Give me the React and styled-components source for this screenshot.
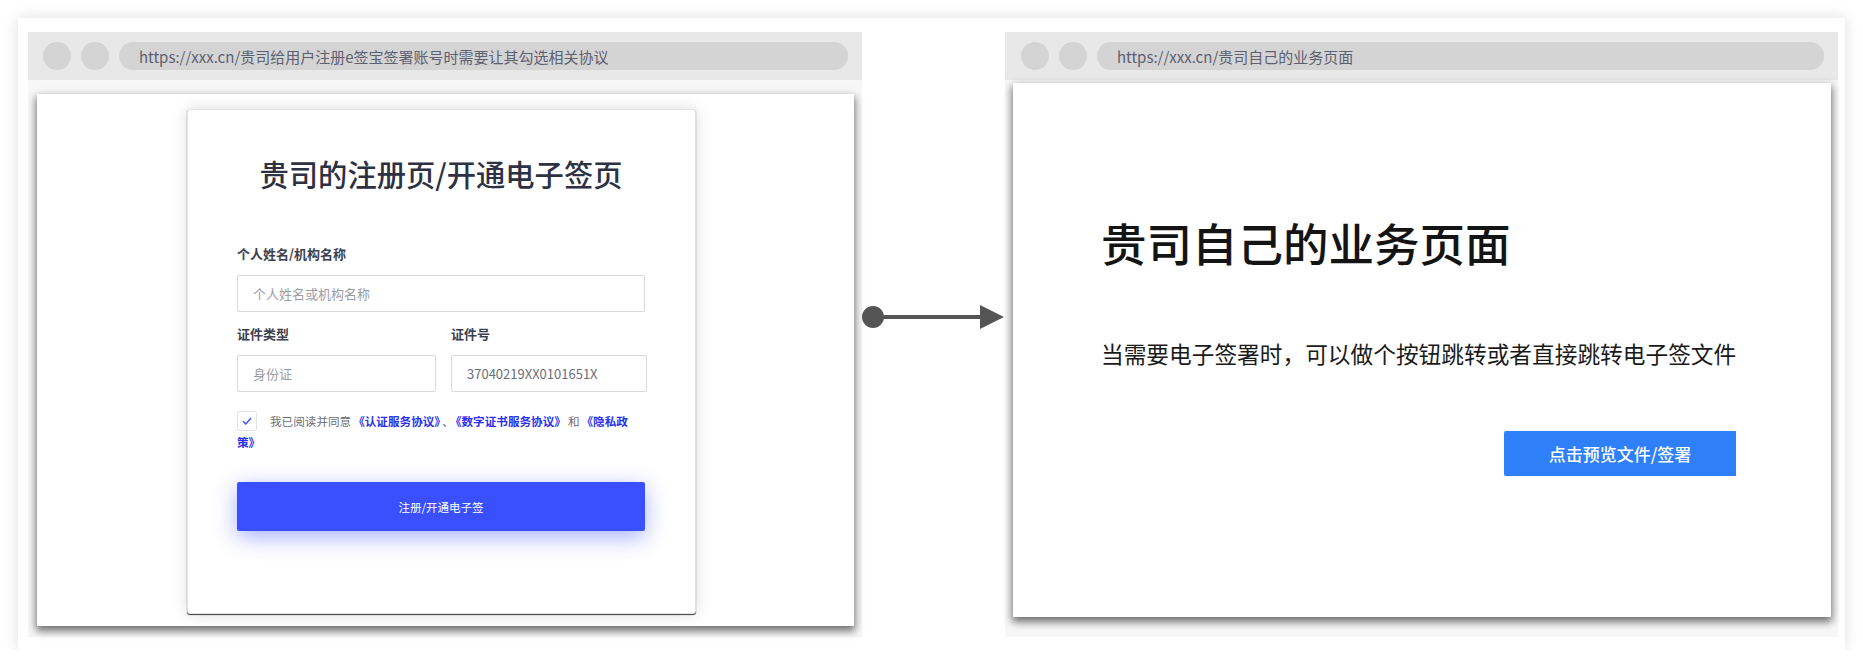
import React from "react";
import styled, { createGlobalStyle } from "styled-components";

const GlobalStyle = createGlobalStyle`
  html, body {
    margin: 0;
    padding: 0;
    background: #ffffff;
    font-family: "Noto Sans CJK SC", "Noto Sans", sans-serif;
  }
`;

const Board = styled.div`
  margin: 18px 0 0 18px;
  width: 1827px;
  height: 632px;
  box-sizing: border-box;
  padding: 14px 7px 12px 10px;
  display: flex;
  align-items: flex-start;
  background: #fff;
  box-shadow: 0 0 14px rgba(0, 0, 0, 0.13);
`;

const Window = styled.div`
  width: ${(p) => p.$width}px;
  height: 605px;
  display: flex;
  flex-direction: column;
  background: #f7f7f7;
`;

const TopBar = styled.div`
  height: 48px;
  flex-shrink: 0;
  display: flex;
  align-items: center;
  gap: 10px;
  padding: 0 14px 0 ${(p) => p.$padLeft}px;
  background: #e8e8e8;
`;

const Dot = styled.span`
  width: 28px;
  height: 28px;
  border-radius: 50%;
  background: #d4d4d4;
  flex-shrink: 0;
`;

const Address = styled.div`
  flex: 1;
  height: 28px;
  border-radius: 14px;
  background: #d4d4d4;
  display: flex;
  align-items: center;
  padding-left: 20px;
  font-size: 15px;
  color: #5d6070;
  white-space: nowrap;
`;

const Screen = styled.div`
  flex: 1;
  margin: ${(p) => p.$margin};
  background: #fff;
  box-shadow: 0 4px 8px 1px rgba(0, 0, 0, 0.55);
  display: flex;
  flex-direction: column;
`;

/* left: the sign-up form */
const FormCard = styled.div`
  margin: 15px 0 0 150px;
  width: 509px;
  height: 505px;
  box-sizing: border-box;
  padding: 43px 50px 0 49px;
  background: #fff;
  border: 1px solid #e2e2e2;
  border-radius: 3px;
  box-shadow: 0 1px 1px rgba(0, 0, 0, 0.75), 0 0 16px rgba(0, 0, 0, 0.14);
  display: flex;
  flex-direction: column;
`;

const FormTitle = styled.h1`
  margin: 0 0 52px;
  text-align: center;
  font-size: 29.3px;
  line-height: 40px;
  font-weight: 500;
  color: #2d3142;
`;

const Label = styled.div`
  font-size: 13px;
  line-height: 18px;
  font-weight: 700;
  color: #3c3f50;
  margin-bottom: 12px;
`;

const Input = styled.div`
  height: 37px;
  box-sizing: border-box;
  border: 1px solid #d9d9de;
  border-radius: 2px;
  padding-left: 15px;
  display: flex;
  align-items: center;
  font-size: 13px;
  color: ${(p) => (p.$filled ? "#6b6e7a" : "#9a9ca5")};
`;

const Row = styled.div`
  display: grid;
  grid-template-columns: 199px 196px;
  column-gap: 15px;
  margin-top: 13px;
`;

const Agree = styled.p`
  margin: 19px 0 0;
  font-size: 11.6px;
  line-height: 21px;
  color: #6b6e7a;
`;

const Check = styled.span`
  display: inline-flex;
  align-items: center;
  justify-content: center;
  width: 20px;
  height: 20px;
  box-sizing: border-box;
  border: 1px solid #e4e4e8;
  border-radius: 2px;
  vertical-align: middle;
  margin: -3px 13px 0 0;
`;

const Link = styled.b`
  color: #2b30f0;
  font-weight: 700;
  margin: 0 2px;
`;

const SubmitButton = styled.button`
  margin-top: 29px;
  height: 49px;
  border: none;
  border-radius: 2px;
  background: #3a4ffe;
  color: #fff;
  font-family: inherit;
  font-size: 11.5px;
  box-shadow: 0 6px 22px rgba(58, 79, 254, 0.45);
`;

/* right: the company's own page */
const Business = styled.div`
  width: 635px;
  padding: 130px 0 0 88px;
  display: flex;
  flex-direction: column;
`;

const BigTitle = styled.h2`
  margin: 0;
  font-size: 45.5px;
  line-height: 58px;
  font-weight: 500;
  color: #141414;
`;

const Lead = styled.p`
  margin: 67px 0 0;
  font-size: 22.7px;
  line-height: 31px;
  color: #1a1a1a;
  white-space: nowrap;
`;

const PreviewButton = styled.button`
  align-self: flex-end;
  margin-top: 62px;
  width: 232px;
  height: 45px;
  border: none;
  border-radius: 2px 0 0 2px;
  background: #2e7ff8;
  color: #fff;
  font-family: inherit;
  font-size: 17px;
  font-weight: 500;
`;

const Connector = styled.div`
  width: 143px;
  flex-shrink: 0;
  padding-top: 273px;
  display: flex;
`;

function Browser({ width, url, padLeft, screenMargin, children }) {
  return (
    <Window $width={width}>
      <TopBar $padLeft={padLeft}>
        <Dot />
        <Dot />
        <Address>{url}</Address>
      </TopBar>
      <Screen $margin={screenMargin}>{children}</Screen>
    </Window>
  );
}

export default function App() {
  return (
    <>
      <GlobalStyle />
      <Board>
        <Browser
          width={834}
          padLeft={15}
          url="https://xxx.cn/贵司给用户注册e签宝签署账号时需要让其勾选相关协议"
          screenMargin="14px 8px 11px 9px"
        >
          <FormCard>
            <FormTitle>贵司的注册页/开通电子签页</FormTitle>
            <Label>个人姓名/机构名称</Label>
            <Input>个人姓名或机构名称</Input>
            <Row>
              <Label>证件类型</Label>
              <Label>证件号</Label>
              <Input>身份证</Input>
              <Input $filled>37040219XX0101651X</Input>
            </Row>
            <Agree>
              <Check>
                <svg width="10" height="8" viewBox="0 0 10 8">
                  <path d="M1 4.2 L3.8 7 L9 1" fill="none" stroke="#3a4ffe" strokeWidth="1.4" />
                </svg>
              </Check>
              我已阅读并同意<Link>《认证服务协议》</Link>、<Link>《数字证书服务协议》</Link>和<Link>《隐私政策》</Link>
            </Agree>
            <SubmitButton>注册/开通电子签</SubmitButton>
          </FormCard>
        </Browser>

        <Connector>
          <svg width="143" height="24" viewBox="0 0 143 24">
            <circle cx="11" cy="12" r="11" fill="#555" />
            <line x1="11" y1="12" x2="120" y2="12" stroke="#555" strokeWidth="4" />
            <polygon points="118,0 142,12 118,24" fill="#555" />
          </svg>
        </Connector>

        <Browser
          width={833}
          padLeft={16}
          url="https://xxx.cn/贵司自己的业务页面"
          screenMargin="3px 7px 20px 8px"
        >
          <Business>
            <BigTitle>贵司自己的业务页面</BigTitle>
            <Lead>当需要电子签署时，可以做个按钮跳转或者直接跳转电子签文件</Lead>
            <PreviewButton>点击预览文件/签署</PreviewButton>
          </Business>
        </Browser>
      </Board>
    </>
  );
}
